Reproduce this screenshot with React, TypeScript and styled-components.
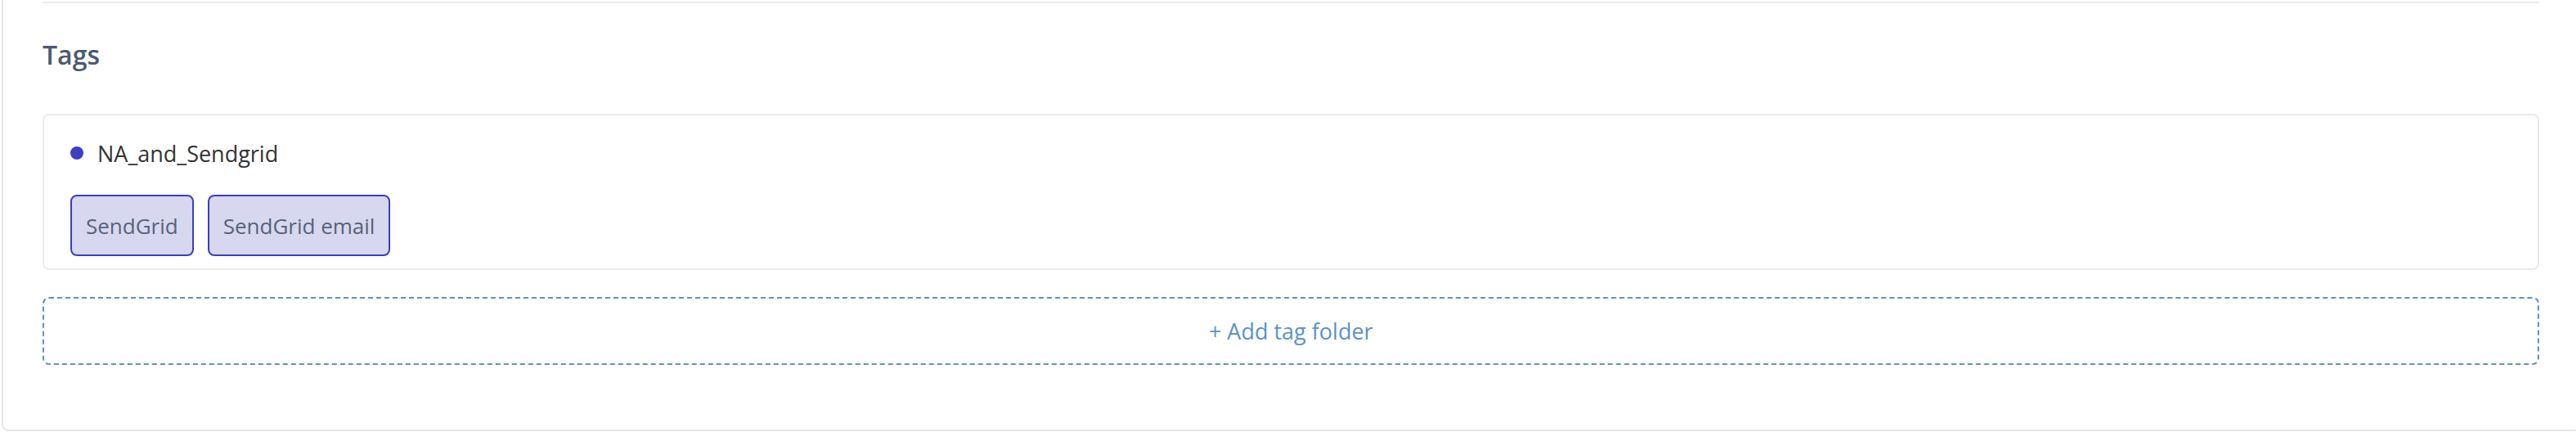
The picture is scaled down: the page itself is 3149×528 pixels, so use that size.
import React from "react"
import styled, { createGlobalStyle } from "styled-components"

const GlobalStyle = createGlobalStyle`
  html,
  body {
    margin: 0;
    padding: 0;
    overflow: hidden;
    background: #ffffff;
  }

  body {
    font-family: "Open Sans", "Noto Sans", Arial, sans-serif;
  }
`

const Page = styled.div`
  padding-left: 2px;
`

const Panel = styled.section`
  box-sizing: border-box;
  width: calc(100vw + 3px);
  padding: 2px 48px 79px;
  border: 2px solid #e6e7eb;
  border-top: none;
  border-radius: 0 0 8px 8px;
  background: #ffffff;
`

const Divider = styled.hr`
  margin: 0;
  height: 2px;
  border: none;
  background: #ededf0;
`

const Title = styled.h2`
  margin: 41px 0 50px;
  font-size: 32px;
  line-height: 44px;
  font-weight: 600;
  color: #4b5970;
`

const FolderCard = styled.div`
  box-sizing: border-box;
  padding: 26px 32px 15px;
  border: 2px solid #ebebef;
  border-radius: 8px;
`

const FolderHeader = styled.div`
  display: flex;
  align-items: center;
  gap: 17px;
  height: 40px;
  font-size: 27px;
  color: #333333;
`

const Dot = styled.span<{ $color: string }>`
  width: 16px;
  height: 16px;
  border-radius: 50%;
  background: ${(p) => p.$color};
  flex-shrink: 0;
`

const ChipRow = styled.div`
  display: flex;
  gap: 17px;
  margin-top: 31px;
`

const Chip = styled.span`
  box-sizing: border-box;
  display: inline-flex;
  align-items: center;
  height: 75px;
  padding: 0 17px;
  border: 2px solid #3a3dc0;
  border-radius: 8px;
  background: #d7d7f0;
  color: #56637a;
  font-size: 26px;
  white-space: nowrap;
`

const AddFolder = styled.button`
  box-sizing: border-box;
  display: flex;
  align-items: center;
  justify-content: center;
  width: 100%;
  height: 83px;
  margin-top: 33px;
  padding: 0;
  border: 2px dashed #5a93c7;
  border-radius: 8px;
  background: transparent;
  color: #5a93c7;
  font-family: inherit;
  font-size: 27px;
  cursor: pointer;
`

const folders = [
  {
    name: "NA_and_Sendgrid",
    color: "#3c3fc2",
    tags: ["SendGrid", "SendGrid email"],
  },
]

export default function App() {
  return (
    <Page>
      <GlobalStyle />
      <Panel>
        <Divider />
        <Title>Tags</Title>
        {folders.map((folder) => (
          <FolderCard key={folder.name}>
            <FolderHeader>
              <Dot $color={folder.color} />
              {folder.name}
            </FolderHeader>
            <ChipRow>
              {folder.tags.map((tag) => (
                <Chip key={tag}>{tag}</Chip>
              ))}
            </ChipRow>
          </FolderCard>
        ))}
        <AddFolder>+ Add tag folder</AddFolder>
      </Panel>
    </Page>
  )
}
